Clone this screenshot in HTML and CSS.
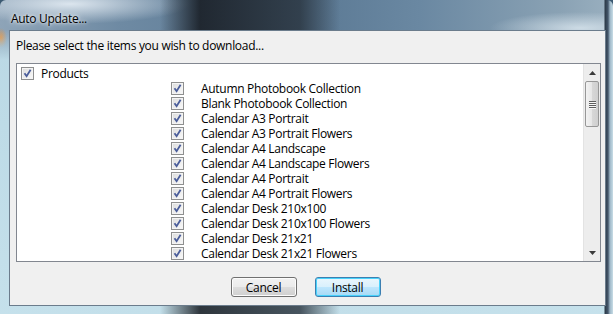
FILE: index.html
```html
<!DOCTYPE html>
<html>
<head>
<meta charset="utf-8">
<link rel="stylesheet" href="styles.css">
</head>
<body>
<div class="window">
  <div class="titlebar">Auto Update...</div>
  <div class="client">
    <div class="prompt">Please select the items you wish to download...</div>
    <div class="listbox">
      <div class="list">
        <div class="row root"><span class="cb"></span><span class="label">Products</span></div>
        <div class="row child"><span class="cb"></span><span class="label">Autumn Photobook Collection</span></div>
        <div class="row child"><span class="cb"></span><span class="label">Blank Photobook Collection</span></div>
        <div class="row child"><span class="cb"></span><span class="label">Calendar A3 Portrait</span></div>
        <div class="row child"><span class="cb"></span><span class="label">Calendar A3 Portrait Flowers</span></div>
        <div class="row child"><span class="cb"></span><span class="label">Calendar A4 Landscape</span></div>
        <div class="row child"><span class="cb"></span><span class="label">Calendar A4 Landscape Flowers</span></div>
        <div class="row child"><span class="cb"></span><span class="label">Calendar A4 Portrait</span></div>
        <div class="row child"><span class="cb"></span><span class="label">Calendar A4 Portrait Flowers</span></div>
        <div class="row child"><span class="cb"></span><span class="label">Calendar Desk 210x100</span></div>
        <div class="row child"><span class="cb"></span><span class="label">Calendar Desk 210x100 Flowers</span></div>
        <div class="row child"><span class="cb"></span><span class="label">Calendar Desk 21x21</span></div>
        <div class="row child"><span class="cb"></span><span class="label">Calendar Desk 21x21 Flowers</span></div>
      </div>
      <div class="scrollbar">
        <div class="arrow up"><svg width="7" height="4" viewBox="0 0 7 4"><path d="M3.5 0 L7 4 L0 4 Z" fill="#3a3a3a"/></svg></div>
        <div class="thumb"><span class="grip"></span><span class="grip"></span><span class="grip"></span><span class="grip"></span></div>
        <div class="track"></div>
        <div class="arrow down"><svg width="7" height="4" viewBox="0 0 7 4"><path d="M0 0 L7 0 L3.5 4 Z" fill="#3a3a3a"/></svg></div>
      </div>
    </div>
    <div class="buttons">
      <button class="btn">Cancel</button>
      <button class="btn default">Install</button>
    </div>
  </div>
</div>
</body>
</html>
```

FILE: styles.css
```css
* { box-sizing: border-box; }
html, body { margin: 0; padding: 0; background: #3c5a72; }
body { width: 613px; height: 314px; overflow: hidden; font-family: "Open Sans", "Noto Sans", sans-serif; letter-spacing: -0.3px; }

.window {
  width: 613px;
  height: 314px;
  padding: 0 7px 8px 8px;
  display: flex;
  flex-direction: column;
  background:
    linear-gradient(to right, transparent 0, transparent 604px, #2c3a48 605px, #44566a 608px, #9fb8c8 610px, #c8dde6 613px),
    linear-gradient(to right, transparent 0, transparent 160px, rgba(20,24,30,0.85) 200px, rgba(40,50,60,0.8) 300px, transparent 340px),
    linear-gradient(to bottom, transparent 0, transparent 30px, rgba(190,220,232,0.95) 60px, rgba(200,228,238,0.95) 100%),
    radial-gradient(ellipse 6px 10px at 1px 38px, rgba(230,140,50,0.9), transparent),
    radial-gradient(ellipse 120px 20px at 70px 4px, rgba(230,238,245,0.9), transparent),
    radial-gradient(ellipse 90px 16px at 580px 28px, rgba(220,232,240,0.8), transparent),
    linear-gradient(to right, #8ea4b8 0, #6e8aa3 120px, #5a7893 300px, #6a88a2 420px, #8aa2b4 560px, #9ab0c0 613px);
  border-radius: 6px 6px 0 0;
}

.titlebar {
  height: 30px;
  padding: 11px 0 0 3px;
  font-size: 12px;
  line-height: 16px;
  color: #000;
  text-shadow: 0 0 6px rgba(255,255,255,0.9), 0 0 3px rgba(255,255,255,0.9);
}

.client {
  flex: 1;
  margin-left: 1px;
  border: 1px solid #6b7c8c;
  background: #f0f0f0;
  padding: 7px 4px 0 6px;
  display: flex;
  flex-direction: column;
}

.prompt {
  font-size: 12px;
  line-height: 16px;
  height: 25px;
  color: #000;
}

.listbox {
  height: 199px;
  border: 1px solid #828790;
  background: #fff;
  display: flex;
}

.list {
  flex: 1;
  padding-top: 2px;
  overflow: hidden;
}

.row {
  height: 15px;
  line-height: 14px;
  display: flex;
  align-items: center;
  font-size: 12px;
  color: #000;
  white-space: nowrap;
}
.row.root { padding-left: 4px; }
.row.child { padding-left: 154px; }
.row.root .label { margin-left: 7px; }
.row.child .label { margin-left: 17px; }

.cb {
  width: 13px;
  height: 13px;
  flex: none;
  border: 1px solid #8e8f8f;
  background:
    url("data:image/svg+xml,%3Csvg xmlns='http://www.w3.org/2000/svg' width='11' height='11' viewBox='0 0 11 11'%3E%3Cpath d='M2.5 5.2 L4.6 8.2 L8.6 1.8' fill='none' stroke='%234a5d9a' stroke-width='1.8'/%3E%3C/svg%3E") center/11px 11px no-repeat,
    linear-gradient(135deg, #dcdcdc, #fafafa);
  box-shadow: inset 0 0 0 1px #f4f4f4;
}

.scrollbar {
  width: 17px;
  flex: none;
  display: flex;
  flex-direction: column;
  background: #ededed;
  border-left: 1px solid #e3e3e3;
}
.arrow {
  height: 17px;
  display: flex;
  align-items: center;
  justify-content: center;
}
.thumb {
  height: 46px;
  margin: 0 1px;
  border: 1px solid #979797;
  border-radius: 2px;
  background: linear-gradient(to right, #f2f2f2, #e6e6e6 50%, #d7d7d7 51%, #cfcfcf);
  display: flex;
  flex-direction: column;
  align-items: center;
  justify-content: center;
  gap: 1px;
}
.grip {
  width: 7px;
  height: 1px;
  background: #5e5e5e;
  box-shadow: 0 1px 0 #f7f7f7;
}
.track { flex: 1; }

.buttons {
  flex: 1;
  display: flex;
  justify-content: center;
  align-items: flex-start;
  gap: 18px;
  padding-top: 15px;
  padding-right: 6px;
}
.btn {
  width: 66px;
  height: 20px;
  font-family: inherit;
  letter-spacing: -0.3px;
  font-size: 12px;
  line-height: 15px;
  padding: 0;
  color: #000;
  border: 1px solid #707070;
  border-radius: 3px;
  background: linear-gradient(to bottom, #f2f2f2 0, #ebebeb 50%, #dddddd 51%, #cfcfcf 100%);
  box-shadow: inset 0 0 0 1px #fcfcfc;
}
.btn.default {
  border-color: #3c7fb1;
  background: linear-gradient(to bottom, #eaf6fd 0, #d9f0fc 50%, #bee6fd 51%, #a7d9f5 100%);
  box-shadow: inset 0 0 0 1px #48d2fb;
}
```
